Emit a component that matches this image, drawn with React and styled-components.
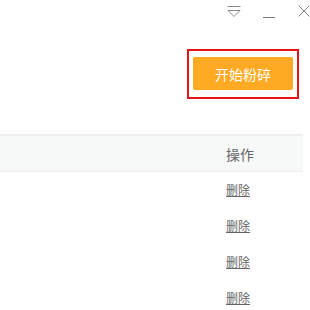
import React from "react";
import styled, { createGlobalStyle } from "styled-components";

const Global = createGlobalStyle`
  html, body {
    margin: 0;
    padding: 0;
    background: #ffffff;
    font-family: "Noto Sans CJK SC", "Liberation Sans", sans-serif;
  }
`;

const Window = styled.div`
  width: 310px;
  height: 310px;
  overflow: hidden;
`;

const TitleBar = styled.div`
  height: 26px;
  display: flex;
  justify-content: flex-end;
  align-items: flex-start;
  padding-top: 5px;
  box-sizing: border-box;
`;

const IconButton = styled.div`
  display: flex;
  margin-left: ${({ gap }) => gap}px;
  cursor: pointer;
`;

const Toolbar = styled.div`
  display: flex;
  justify-content: flex-end;
  padding: 23px 11px 0 0;
`;

const Highlight = styled.div`
  border: 2px solid #e3141c;
  padding: 6px 4px 7px;
`;

const StartButton = styled.button`
  width: 100px;
  height: 33px;
  border: none;
  border-radius: 2px;
  background: #ffaa22;
  color: #ffffff;
  font-family: "Noto Sans CJK SC", sans-serif;
  font-size: 14px;
  padding: 0;
  cursor: pointer;
`;

const Table = styled.div`
  margin-top: 35px;
  width: 303px;
  display: flex;
  flex-direction: column;
`;

const HeaderRow = styled.div`
  height: 35px;
  border-top: 2px solid #eeeeee;
  border-bottom: 1px solid #eeeeee;
  background: #f7f8f8;
  display: flex;
  align-items: center;
`;

const Row = styled.div`
  height: 36px;
  display: flex;
  align-items: center;
  margin-top: ${({ first }) => (first ? -1 : 0)}px;
`;

const Spacer = styled.div`
  width: 226px;
  flex: none;
`;

const HeadCell = styled.div`
  font-size: 14px;
  color: #666666;
`;

const DeleteLink = styled.a`
  font-size: 12px;
  color: #666666;
  text-decoration: underline;
  cursor: pointer;
`;

const Triangle = () => (
  <svg width="14" height="13" viewBox="0 0 14 13">
    <line x1="0.5" y1="1.5" x2="13.5" y2="1.5" stroke="#888" strokeWidth="1" />
    <path d="M1 5.5 H13 L7 11.5 Z" fill="none" stroke="#888" strokeWidth="1" />
  </svg>
);

const Minus = () => (
  <svg width="12" height="14" viewBox="0 0 12 14">
    <line x1="0" y1="12.5" x2="12" y2="12.5" stroke="#777" strokeWidth="1" />
  </svg>
);

const Close = () => (
  <svg width="12" height="12" viewBox="0 0 12 12">
    <path d="M0.5 0.5 L11.5 11.5 M11.5 0.5 L0.5 11.5" stroke="#888" strokeWidth="1" />
  </svg>
);

export default function App() {
  const rows = [1, 2, 3, 4];
  return (
    <Window>
      <Global />
      <TitleBar>
        <IconButton gap={0}><Triangle /></IconButton>
        <IconButton gap={22}><Minus /></IconButton>
        <IconButton gap={23}><Close /></IconButton>
      </TitleBar>
      <Toolbar>
        <Highlight>
          <StartButton>开始粉碎</StartButton>
        </Highlight>
      </Toolbar>
      <Table>
        <HeaderRow>
          <Spacer />
          <HeadCell>操作</HeadCell>
        </HeaderRow>
        {rows.map((r, i) => (
          <Row key={r} first={i === 0}>
            <Spacer />
            <DeleteLink>删除</DeleteLink>
          </Row>
        ))}
      </Table>
    </Window>
  );
}
